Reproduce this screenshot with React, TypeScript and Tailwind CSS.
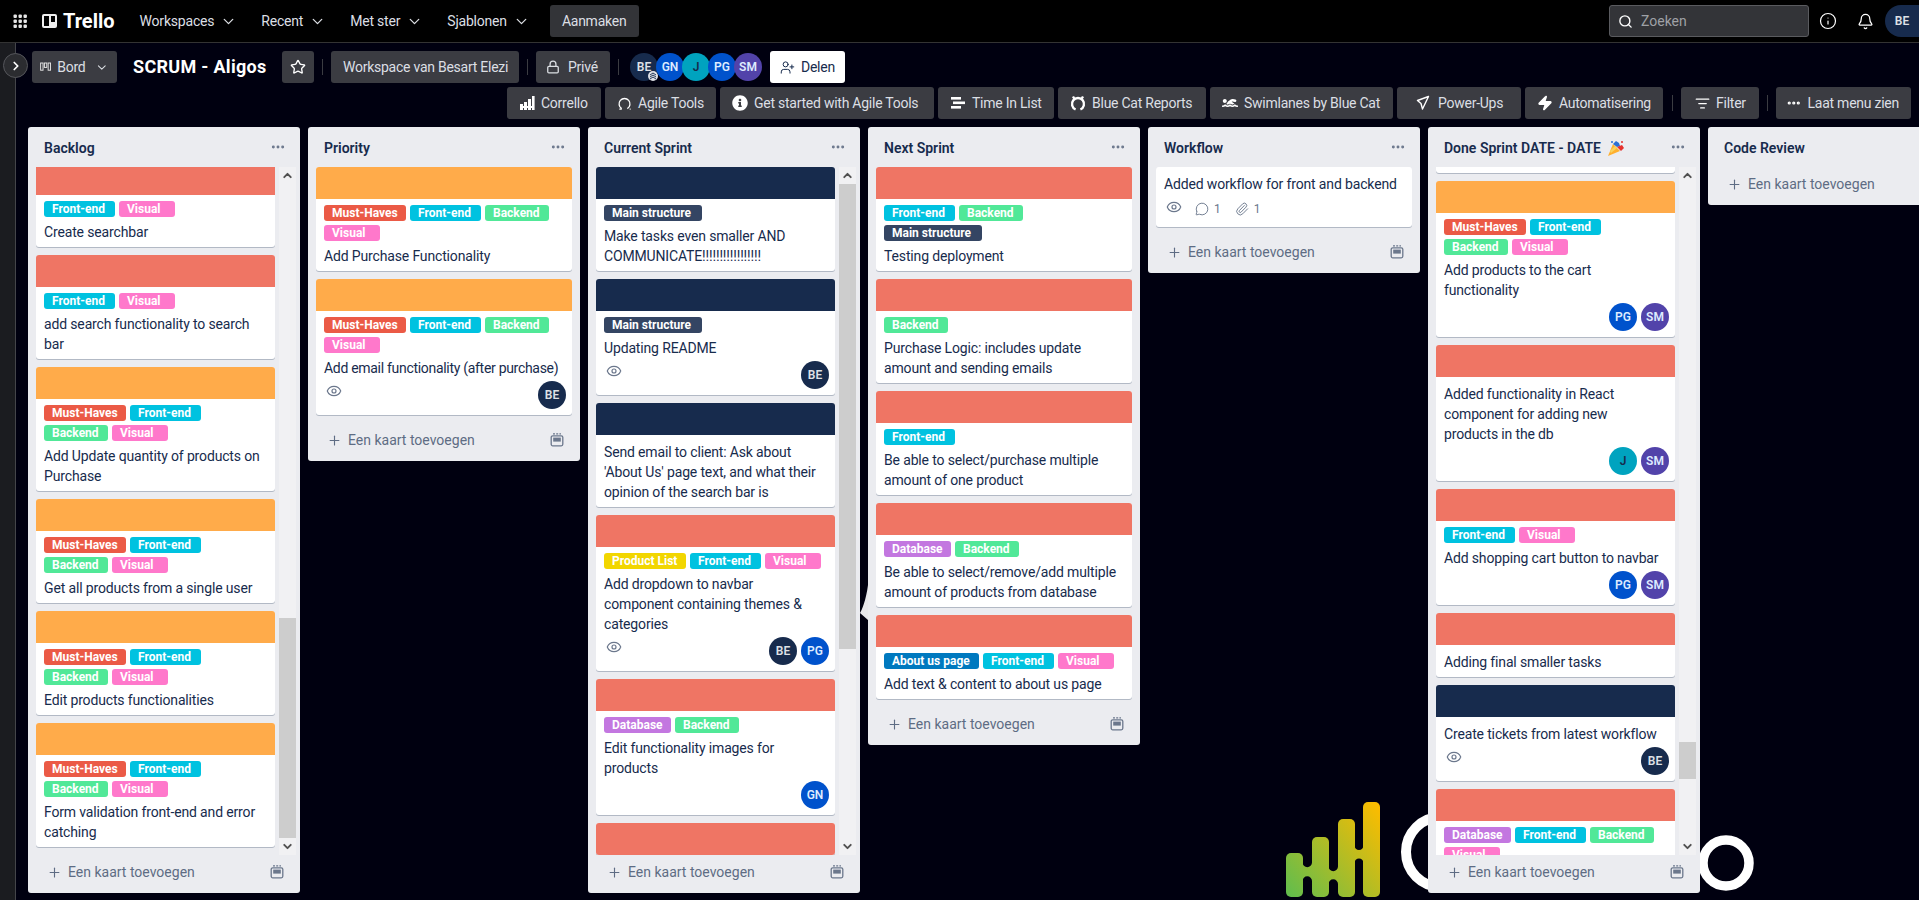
import { Bell, ChevronDown, ChevronRight, ChevronUp, Ellipsis, Eye, Info, ListFilter, Lock, MessageCircle, Paperclip, Plus, Search, Star, UserPlus, Zap } from 'lucide-react'
import { FaInfoCircle, FaSwimmer } from 'react-icons/fa'
import type { ReactNode } from 'react'

const labelStyles: Record<string, string> = {
  'Must-Haves': 'bg-[#eb5a46] w-[82px]',
  'Front-end': 'bg-[#00c2e0] w-[71px]',
  Backend: 'bg-[#51e898] w-[64px]',
  Visual: 'bg-[#ff78cb] w-[56px]',
  'Main structure': 'bg-[#344563] w-[98px]',
  'Product List': 'bg-[#f2d600] w-[82px]',
  Database: 'bg-[#c377e0] w-[67px]',
  'About us page': 'bg-[#0079bf] w-[95px]',
}

const avatarStyles: Record<string, string> = {
  BE: 'bg-[#172b4d] text-[#dfe1e6]',
  GN: 'bg-[#0052cc] text-[#deebff]',
  J: 'bg-[#00a3bf] text-[#172b4d]',
  PG: 'bg-[#0052cc] text-[#deebff]',
  SM: 'bg-[#5243aa] text-[#deebff]',
}

const salmon = 'bg-[#ef7564]'
const orange = 'bg-[#ffab4a]'
const navy = 'bg-[#172b4d]'
const allLabels = ['Must-Haves', 'Front-end', 'Backend', 'Visual']

type CardData = {
  cover?: string
  labels?: string[]
  title: string
  titleClass?: string
  eye?: boolean
  members?: string[]
  comments?: number
  attachments?: number
}

type ListData = {
  title: ReactNode
  cards: CardData[]
  scroll?: { before: string; thumb: string }
  contentClass?: string
  stub?: boolean
  noCopy?: boolean
}

const lists: ListData[] = [
  {
    title: 'Backlog',
    scroll: { before: 'h-[434px]', thumb: 'h-[220px]' },
    contentClass: '-mt-1',
    cards: [
      { cover: salmon, labels: ['Front-end', 'Visual'], title: 'Create searchbar' },
      { cover: salmon, labels: ['Front-end', 'Visual'], title: 'add search functionality to search bar' },
      { cover: orange, labels: allLabels, title: 'Add Update quantity of products on Purchase' },
      { cover: orange, labels: allLabels, title: 'Get all products from a single user' },
      { cover: orange, labels: allLabels, title: 'Edit products functionalities' },
      { cover: orange, labels: allLabels, title: 'Form validation front-end and error catching' },
    ],
  },
  {
    title: 'Priority',
    cards: [
      { cover: orange, labels: allLabels, title: 'Add Purchase Functionality' },
      {
        cover: orange,
        labels: allLabels,
        title: 'Add email functionality (after purchase)',
        titleClass: 'whitespace-nowrap !tracking-[-0.3px]',
        eye: true,
        members: ['BE'],
      },
    ],
  },
  {
    title: 'Current Sprint',
    scroll: { before: 'h-0', thumb: 'h-[465px]' },
    cards: [
      { cover: navy, labels: ['Main structure'], title: 'Make tasks even smaller AND COMMUNICATE!!!!!!!!!!!!!!!!!' },
      { cover: navy, labels: ['Main structure'], title: 'Updating README', eye: true, members: ['BE'] },
      { cover: navy, title: "Send email to client: Ask about 'About Us' page text, and what their opinion of the search bar is" },
      { cover: salmon, labels: ['Product List', 'Front-end', 'Visual'], title: 'Add dropdown to navbar\ncomponent containing themes &\ncategories', eye: true, members: ['BE', 'PG'] },
      { cover: salmon, labels: ['Database', 'Backend'], title: 'Edit functionality images for products', members: ['GN'] },
      { cover: salmon, title: '' },
    ],
  },
  {
    title: 'Next Sprint',
    cards: [
      { cover: salmon, labels: ['Front-end', 'Backend', 'Main structure'], title: 'Testing deployment' },
      { cover: salmon, labels: ['Backend'], title: 'Purchase Logic: includes update amount and sending emails' },
      { cover: salmon, labels: ['Front-end'], title: 'Be able to select/purchase multiple amount of one product' },
      { cover: salmon, labels: ['Database', 'Backend'], title: 'Be able to select/remove/add multiple amount of products from database' },
      { cover: salmon, labels: ['About us page', 'Front-end', 'Visual'], title: 'Add text & content to about us page' },
    ],
  },
  {
    title: 'Workflow',
    cards: [{ title: 'Added workflow for front and backend', eye: true, comments: 1, attachments: 1 }],
  },
  {
    title: (
      <span className="flex items-center gap-1.5">
        Done Sprint DATE - DATE <PartyIcon />
      </span>
    ),
    scroll: { before: 'h-[558px]', thumb: 'h-[37px]' },
    stub: true,
    cards: [
      { cover: orange, labels: allLabels, title: 'Add products to the cart functionality', members: ['PG', 'SM'] },
      { cover: salmon, title: 'Added functionality in React\ncomponent for adding new\nproducts in the db', members: ['J', 'SM'] },
      { cover: salmon, labels: ['Front-end', 'Visual'], title: 'Add shopping cart button to navbar', members: ['PG', 'SM'] },
      { cover: salmon, title: 'Adding final smaller tasks' },
      { cover: navy, title: 'Create tickets from latest workflow', eye: true, members: ['BE'] },
      { cover: salmon, labels: ['Database', 'Front-end', 'Backend', 'Visual'], title: '' },
    ],
  },
  { title: 'Code Review', cards: [], noCopy: true },
]

function PartyIcon() {
  return (
    <svg width="18" height="17" viewBox="0 0 18 17">
      <path d="M1 16 L6 4 L13 11 Z" fill="#ffb02e" />
      <path d="M3 11 L8 6 L10 8 L4 13 Z" fill="#f8d35e" />
      <path d="M6 4 L9 1 L12 3 L13 6 L10 7 Z" fill="#2a6fd6" />
      <path d="M10 7 L15 5 L17 8 L14 11 Z" fill="#e5322d" />
      <circle cx="5" cy="2" r="1" fill="#2a6fd6" />
      <circle cx="15" cy="2" r="1" fill="#e5322d" />
    </svg>
  )
}

function TemplateIcon() {
  return (
    <svg width="14" height="14" viewBox="0 0 14 14" fill="none" stroke="#6b778c" strokeWidth="1.3">
      <path d="M3 0.8h2M6.2 0.8h2M9.4 0.8h1.6" />
      <rect x="1.2" y="2.8" width="11.6" height="10" rx="1.5" />
      <rect x="3.2" y="4.6" width="7.6" height="4" fill="#6b778c" stroke="none" />
    </svg>
  )
}

function AdminBadge() {
  return (
    <svg width="10" height="10" viewBox="0 0 10 10" fill="none" stroke="#253858" strokeWidth="1" className="absolute right-0 bottom-0 rounded-full bg-[#dfe1e6]">
      <path d="M2 4 L5 2 L8 4 M2 6 L5 4 L8 6 M2 8 L5 6 L8 8" />
    </svg>
  )
}

function Avatar({ name, className = '', badge }: { name: string; className?: string; badge?: boolean }) {
  return (
    <div className={`relative flex h-7 w-7 shrink-0 items-center justify-center rounded-full text-xs font-semibold ${avatarStyles[name]} ${className}`}>
      {name}
      {badge && <AdminBadge />}
    </div>
  )
}

function Labels({ labels, className = '' }: { labels: string[]; className?: string }) {
  return (
    <div className={`flex flex-wrap gap-1 ${className}`}>
      {labels.map((l) => (
        <span key={l} className={`h-4 truncate rounded-[3px] px-2 text-xs leading-4 font-bold text-white ${labelStyles[l]}`}>
          {l}
        </span>
      ))}
    </div>
  )
}

function Card({ card }: { card: CardData }) {
  return (
    <div className="w-full shrink-0 overflow-hidden rounded-[3px] bg-white shadow-[0_1px_0_#091e4240]">
      {card.cover && <div className={`h-8 ${card.cover}`} />}
      {card.title !== '' && (
        <div className="px-2 pt-1.5 pb-1.5">
          {card.labels && <Labels labels={card.labels} className="mb-1" />}
          <div className={`translate-y-px text-sm leading-5 tracking-[-0.15px] whitespace-pre-line text-[#172b4d] ${card.titleClass ?? ''}`}>{card.title}</div>
          {(card.eye || card.members) && (
            <div className="mt-1 flex items-start">
              {card.eye && (
                <div className="flex h-5 items-center pl-0.5 text-[#6b778c]">
                  <Eye size={16} strokeWidth={1.8} />
                </div>
              )}
              {card.comments && (
                <div className="ml-[13px] flex h-6 items-center gap-[5px] text-xs text-[#6b778c]">
                  <MessageCircle size={14} strokeWidth={1.6} />
                  {card.comments}
                </div>
              )}
              {card.attachments && (
                <div className="ml-[14px] flex h-6 items-center gap-[5px] text-xs text-[#6b778c]">
                  <Paperclip size={14} strokeWidth={1.6} />
                  {card.attachments}
                </div>
              )}
              {card.members && (
                <div className="mr-[-2px] ml-auto flex gap-1">
                  {card.members.map((m) => (
                    <Avatar key={m} name={m} />
                  ))}
                </div>
              )}
            </div>
          )}
        </div>
      )}
      {card.title === '' && card.labels && <Labels labels={card.labels} className="px-2 pt-1.5" />}
    </div>
  )
}

function ScrollBar({ before, thumb }: { before: string; thumb: string }) {
  return (
    <div className="ml-1 flex h-full w-[17px] shrink-0 flex-col bg-[#f1f1f3]">
      <div className="flex h-[17px] shrink-0 items-center justify-center text-[#505050]">
        <ChevronUp size={13} strokeWidth={3.5} />
      </div>
      <div className="min-h-0 flex-1">
        <div className={before} />
        <div className={`bg-[#cdcdcd] ${thumb}`} />
      </div>
      <div className="flex h-[17px] shrink-0 items-center justify-center text-[#505050]">
        <ChevronDown size={13} strokeWidth={3.5} />
      </div>
    </div>
  )
}

function BoardList({ list }: { list: ListData }) {
  const cards = (
    <div className={`flex flex-col gap-2 ${list.contentClass ?? ''}`}>
      {list.stub && <div className="h-1.5 shrink-0 rounded-b-[3px] bg-white shadow-[0_1px_0_#091e4240]" />}
      {list.cards.map((c, i) => (
        <Card key={i} card={c} />
      ))}
    </div>
  )

  return (
    <div className={`flex w-[272px] shrink-0 flex-col rounded-[3px] bg-[#ebecf0] ${list.scroll ? 'h-[766px]' : ''}`}>
      <div className="flex h-10 shrink-0 items-center justify-between pr-[14px] pl-4">
        <div className="translate-y-px text-sm leading-5 font-semibold text-[#172b4d]">{list.title}</div>
        <Ellipsis size={16} strokeWidth={2.4} className="text-[#6b778c]" />
      </div>
      {list.scroll ? (
        <div className="flex min-h-0 flex-1 pr-1 pl-2">
          <div className="min-w-0 flex-1 overflow-hidden">{cards}</div>
          <ScrollBar before={list.scroll.before} thumb={list.scroll.thumb} />
        </div>
      ) : (
        list.cards.length > 0 && <div className="mb-2 px-2">{cards}</div>
      )}
      <div className="flex h-[38px] shrink-0 items-center pr-4 pb-1 pl-[19px] text-sm text-[#5e6c84]">
        <Plus size={15} strokeWidth={1.8} />
        <span className="ml-1.5">Een kaart toevoegen</span>
        {!list.noCopy && (
          <span className="ml-auto">
            <TemplateIcon />
          </span>
        )}
      </div>
    </div>
  )
}

function BarButton({ icon, children, className = '' }: { icon?: ReactNode; children?: ReactNode; className?: string }) {
  return (
    <div className={`flex h-8 shrink-0 items-center gap-1.5 rounded-[3px] bg-[#3b3c42] px-3 text-sm tracking-[-0.25px] whitespace-nowrap text-[#dcdfe4] ${className}`}>
      {icon}
      {children}
    </div>
  )
}

function Divider({ className = 'mx-2' }: { className?: string }) {
  return <div className={`h-4 w-px shrink-0 bg-[#3b3c42] ${className}`} />
}

function NavItem({ children }: { children: ReactNode }) {
  return (
    <div className="flex h-8 items-center gap-1.5 px-3 text-sm tracking-[-0.2px] text-[#dcdfe4]">
      {children}
      <ChevronDown size={17} strokeWidth={1.8} />
    </div>
  )
}

function GridIcon() {
  const dots = [1.5, 6.5, 11.5]
  return (
    <svg width="16" height="16" viewBox="0 0 16 16" fill="#e6e6e6" className="ml-3">
      {dots.map((y) => dots.map((x) => <rect key={`${x}-${y}`} x={x} y={y} width="3.4" height="3.4" rx="1" />))}
    </svg>
  )
}

function TrelloLogo() {
  return (
    <div className="ml-[14px] flex items-center gap-1.5 text-white">
      <svg width="15" height="14" viewBox="0 0 15 14">
        <rect width="15" height="14" rx="2" fill="#eee" />
        <rect x="2" y="2" width="5" height="10" fill="#000" />
        <rect x="9" y="2" width="4" height="6" fill="#000" />
      </svg>
      <span className="text-xl leading-6 font-bold">Trello</span>
    </div>
  )
}

function CorrelloIcon() {
  return (
    <svg width="16" height="16" viewBox="0 0 16 16" fill="#fff">
      <rect x="1" y="9" width="3" height="6" />
      <rect x="5" y="7" width="3" height="8" />
      <rect x="9" y="4" width="3" height="11" />
      <rect x="13" y="1" width="2.6" height="14" />
      <rect x="1" y="11" width="14" height="2" />
    </svg>
  )
}

function AgileIcon() {
  return (
    <svg width="16" height="16" viewBox="0 0 16 16" fill="none" stroke="#fff" strokeWidth="1.4">
      <path d="M2.5 14.5h2.6 M5 14 A5.8 5.8 0 1 1 11 14 M13.5 14.5h1" />
    </svg>
  )
}

function TimeIcon() {
  return (
    <svg width="16" height="16" viewBox="0 0 16 16" fill="#fff">
      <rect x="1" y="2" width="10" height="2.6" />
      <rect x="3" y="6.5" width="12" height="2.6" />
      <rect x="1" y="11" width="10" height="2.6" />
    </svg>
  )
}

function CatIcon() {
  return (
    <svg width="16" height="16" viewBox="0 0 16 16" fill="none" stroke="#fff" strokeWidth="2.4">
      <path d="M5.6 14.5 A6 6 0 1 1 10.4 14.5" />
      <path d="M3 1.5 L4.5 4 M13 1.5 L11.5 4" />
    </svg>
  )
}

function RocketIcon() {
  return (
    <svg width="14" height="16" viewBox="0 0 14 16" fill="none" stroke="#fff" strokeWidth="1.4" strokeLinejoin="round">
      <path d="M12.5 1.5 L1.5 5.5 L5 8.5 L6.5 14 Z" />
    </svg>
  )
}

function BoardIcon() {
  return (
    <svg width="14" height="14" viewBox="0 0 14 14" fill="none" stroke="#e6e6e6" strokeWidth="1.2">
      <rect x="0.8" y="2" width="3" height="9" />
      <rect x="5.5" y="2" width="3" height="5.5" />
      <rect x="10.2" y="2" width="3" height="9" />
    </svg>
  )
}

// logo in the board background, most of it sits behind the lists
function BackgroundArt() {
  return (
    <svg className="absolute top-0 left-0" width="1919" height="900" viewBox="0 0 1919 900">
      <defs>
        <linearGradient id="bars" gradientUnits="userSpaceOnUse" x1="1286" y1="897" x2="1385" y2="815">
          <stop offset="0" stopColor="#5fbd4e" />
          <stop offset="1" stopColor="#fbbc00" />
        </linearGradient>
      </defs>
      <g fill="url(#bars)">
        <rect x="1286" y="853" width="17" height="44" rx="5" />
        <rect x="1312" y="837" width="17" height="60" rx="5" />
        <rect x="1338" y="819" width="17" height="78" rx="5" />
        <rect x="1363" y="802" width="17" height="95" rx="5" />
        <path d="M1302.5 862.5 A4.75 4.75 0 0 0 1312 862.5 L1312 881 A4.75 4.75 0 0 0 1302.5 881 Z" />
        <path d="M1328.5 866.5 A4.75 4.75 0 0 0 1338 866.5 L1338 884 A4.75 4.75 0 0 0 1328.5 884 Z" />
        <path d="M1354.5 845.5 A4.5 4.5 0 0 0 1363.5 845.5 L1363.5 863 A4.5 4.5 0 0 0 1354.5 863 Z" />
      </g>
      <circle cx="1441" cy="852" r="35" fill="none" stroke="#fff" strokeWidth="10" />
      <circle cx="1726" cy="863" r="23" fill="none" stroke="#fff" strokeWidth="9.5" />
      <path d="M868 585 C866 600 862 610 860 613 L868 620 L868 606 Z" fill="#e8e8ec" />
    </svg>
  )
}

export default function App() {
  return (
    <div className="relative flex h-screen w-full flex-col overflow-hidden bg-[#000010] [font-family:Roboto,'Liberation_Sans',sans-serif]">
      <BackgroundArt />

      <header className="relative flex h-[43px] shrink-0 items-center border-b border-[#333] bg-black">
        <GridIcon />
        <TrelloLogo />
        <div className="ml-[13px] flex items-center">
          <NavItem>Workspaces</NavItem>
          <NavItem>Recent</NavItem>
          <NavItem>Met ster</NavItem>
          <NavItem>Sjablonen</NavItem>
        </div>
        <BarButton className="ml-2 w-[89px] !bg-[#333438]">Aanmaken</BarButton>
        <div className="ml-auto flex h-8 w-[200px] items-center gap-2 rounded-[3px] border border-[#5a5b5f] bg-[#333438] px-2 text-sm text-[#9fa1a6]">
          <Search size={15} strokeWidth={2.2} className="text-white" />
          Zoeken
        </div>
        <Info size={18} strokeWidth={1.6} className="ml-[10px] text-white" />
        <Bell size={17} strokeWidth={1.8} className="ml-[20px] text-white" />
        <div className="ml-[11px] flex h-8 w-[34px] items-center justify-center rounded-l-full bg-[#172b4d] text-xs font-semibold text-[#dfe1e6]">BE</div>
      </header>

      <div className="relative flex min-h-0 flex-1">
        <div className="relative w-4 shrink-0 border-r border-[#44454a] bg-[#1b1c20]">
          <div className="absolute top-[10px] left-[3px] flex h-[25px] w-[25px] items-center justify-center rounded-full border border-[#55565b] bg-[#2b2c30] text-white">
            <ChevronRight size={14} strokeWidth={3} />
          </div>
        </div>

        <main className="flex min-w-0 flex-1 flex-col overflow-hidden">
          <div className="mt-2 flex h-8 shrink-0 items-center pl-4">
            <BarButton className="w-[85px] !px-2" icon={<BoardIcon />}>
              Bord
              <ChevronDown size={17} strokeWidth={1.8} className="ml-1" />
            </BarButton>
            <h1 className="mr-[15px] ml-4 w-[134px] text-lg leading-8 font-bold tracking-[0.3px] whitespace-nowrap text-white">SCRUM - Aligos</h1>
            <BarButton className="w-8 justify-center !px-0" icon={<Star size={16} strokeWidth={2} className="text-white" />} />
            <Divider />
            <BarButton className="w-[188px]">Workspace van Besart Elezi</BarButton>
            <Divider />
            <BarButton className="w-[74px] gap-2 !px-[10px]" icon={<Lock size={14} strokeWidth={2.2} />}>
              Privé
            </BarButton>
            <Divider />
            <div className="ml-[3px] flex items-center">
              {['BE', 'GN', 'J', 'PG', 'SM'].map((m, i) => (
                <Avatar key={m} name={m} badge={i === 0} className={i > 0 ? '-ml-0.5' : ''} />
              ))}
            </div>
            <BarButton className="ml-2 w-[75px] !bg-white !px-[10px] !text-[#172b4d]" icon={<UserPlus size={15} strokeWidth={1.6} />}>
              Delen
            </BarButton>
          </div>

          <div className="mt-1 flex h-8 shrink-0 items-center justify-end gap-1 pr-2">
            <BarButton className="w-[94px]" icon={<CorrelloIcon />}>Corrello</BarButton>
            <BarButton className="w-[111px]" icon={<AgileIcon />}>Agile Tools</BarButton>
            <BarButton className="w-[214px]" icon={<FaInfoCircle size={16} className="text-white" />}>Get started with Agile Tools</BarButton>
            <BarButton className="w-[116px]" icon={<TimeIcon />}>Time In List</BarButton>
            <BarButton className="w-[148px]" icon={<CatIcon />}>Blue Cat Reports</BarButton>
            <BarButton className="w-[183px]" icon={<FaSwimmer size={16} className="text-white" />}>Swimlanes by Blue Cat</BarButton>
            <BarButton className="w-[124px] gap-2 !pl-[19px]" icon={<RocketIcon />}>Power-Ups</BarButton>
            <BarButton className="w-[138px]" icon={<Zap size={16} fill="#fff" className="text-white" />}>Automatisering</BarButton>
            <Divider className="mr-1 ml-[5px]" />
            <BarButton className="w-[78px] !pl-[14px]" icon={<ListFilter size={15} className="text-white" />}>Filter</BarButton>
            <Divider className="mx-1" />
            <BarButton className="w-[135px] !pl-[10px]" icon={<Ellipsis size={16} strokeWidth={3} className="text-white" />}>Laat menu zien</BarButton>
          </div>

          <div className="mt-2 flex min-h-0 items-start gap-2 pl-3">
            {lists.map((l, i) => (
              <BoardList key={i} list={l} />
            ))}
          </div>
        </main>
      </div>
    </div>
  )
}
